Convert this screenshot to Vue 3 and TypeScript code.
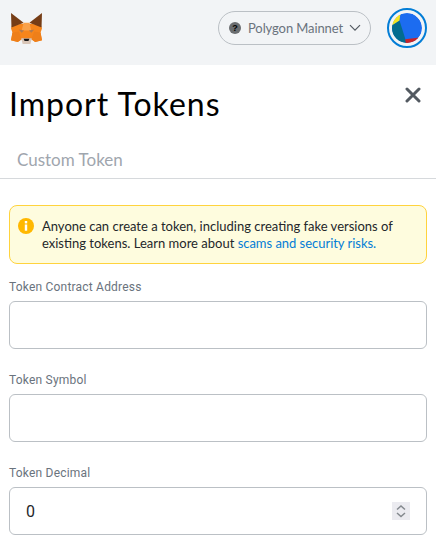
<script setup lang="ts">
import { ref } from 'vue'

const address = ref('')
const symbol = ref('')
const decimal = ref(0)
</script>

<template>
  <div class="page">
    <header class="bar">
      <svg class="fox" viewBox="0 0 34 32" aria-hidden="true">
        <polygon points="2,13 12,11 22,11 32,13 33,16 31.5,20 33,28 26,30 22,27 12,27 8,30 1,28 2.5,20 1,16" fill="#f6851b" />
        <polygon points="1,0 14,10 1.5,15" fill="#763d16" />
        <polygon points="33,0 20,10 32.5,15" fill="#763d16" />
        <polygon points="14,10 20,10 22,18 12,18" fill="#f9a14a" />
        <polygon points="2.5,20 9,19 12,27 8,30 1,28" fill="#ee7f1a" />
        <polygon points="31.5,20 25,19 22,27 26,30 33,28" fill="#ee7f1a" />
        <polygon points="9,17 14.5,18 12,20.5" fill="#b07a50" />
        <polygon points="25,17 19.5,18 22,20.5" fill="#b07a50" />
        <polygon points="11.5,26 22.5,26 21,32 13,32" fill="#d9c6b8" />
        <polygon points="14,26.5 20,26.5 19,29 15,29" fill="#161616" />
      </svg>
      <button class="network" type="button">
        <span class="network-dot">?</span>
        <span class="network-name">Polygon Mainnet</span>
        <svg class="chev" viewBox="0 0 12 8" aria-hidden="true"><path d="M1 1.2l5 5 5-5" fill="none" stroke="#535a61" stroke-width="1.2" /></svg>
      </button>
      <div class="avatar">
        <svg viewBox="0 0 32 32" aria-hidden="true">
          <circle cx="16" cy="16" r="16" fill="#1c6cf0" />
          <path d="M0 13L8 8 15.5 32H0z" fill="#036c8f" />
          <path d="M0 13L8 8 9 0H0z" fill="#f3e51f" />
          <path d="M14 28L29.5 26 22 34H15z" fill="#c8242a" />
        </svg>
      </div>
    </header>

    <main class="content">
      <div class="title-row">
        <h1>Import Tokens</h1>
        <button class="close" type="button" aria-label="Close">
          <svg viewBox="0 0 16 16" aria-hidden="true"><path d="M2 2l12 12M14 2L2 14" stroke="#535a61" stroke-width="3" stroke-linecap="round" /></svg>
        </button>
      </div>

      <div class="tabs"><span>Custom Token</span></div>

      <section class="form">
        <div class="alert">
          <svg class="alert-icon" viewBox="0 0 16 16" aria-hidden="true">
            <circle cx="8" cy="8" r="8" fill="#ffb800" />
            <rect x="6.8" y="3" width="2.4" height="2.4" fill="#fff" />
            <rect x="6.8" y="6.5" width="2.4" height="6.2" fill="#fff" />
          </svg>
          <p>Anyone can create a token, including creating fake versions of existing tokens. Learn more about <a href="#">scams and security risks.</a></p>
        </div>

        <label class="field">
          <span>Token Contract Address</span>
          <input v-model="address" type="text" />
        </label>
        <label class="field">
          <span>Token Symbol</span>
          <input v-model="symbol" type="text" />
        </label>
        <label class="field">
          <span>Token Decimal</span>
          <input v-model="decimal" type="number" />
          <i class="spin" aria-hidden="true">
            <svg viewBox="0 0 18 18"><path d="M5 7.5l4-3.5 4 3.5M5 11l4 3.5 4-3.5" fill="none" stroke="#84898e" stroke-width="1.5" /></svg>
          </i>
        </label>
      </section>
    </main>
  </div>
</template>

<style>
html, body { margin: 0; background: #fff; }
</style>

<style scoped>
.page {
  width: 436px;
  height: 546px;
  overflow: hidden;
  font-family: Lato, "Noto Sans", sans-serif;
  color: #24272a;
  background: #fff;
}
.bar {
  height: 65px;
  box-sizing: border-box;
  display: flex;
  align-items: center;
  padding: 0 9px 9px 10px;
  background: #f2f4f6;
}
.fox { width: 33px; height: 31px; }
.network {
  margin-left: auto;
  width: 153px;
  height: 34px;
  box-sizing: border-box;
  display: flex;
  align-items: center;
  padding: 0 9px 0 10px;
  border: 1px solid #bbc0c5;
  border-radius: 17px;
  background: transparent;
  font: inherit;
  color: #6a737d;
}
.network-dot {
  flex: none;
  width: 12px;
  height: 12px;
  border-radius: 50%;
  background: #6a6d70;
  color: #000;
  font: bold 9px/12px "Liberation Sans", sans-serif;
  text-align: center;
}
.network-name { margin-left: 7px; font-size: 13px; letter-spacing: -0.1px; white-space: nowrap; }
.chev { width: 12px; height: 8px; margin-left: auto; }
.avatar {
  width: 40px;
  height: 40px;
  box-sizing: border-box;
  margin-left: 16px;
  padding: 3px;
  border: 2px solid #037dd6;
  border-radius: 50%;
}
.avatar svg { display: block; width: 100%; height: 100%; border-radius: 50%; }
.content { padding: 0 9px; }
.title-row {
  height: 79px;
  display: flex;
  justify-content: space-between;
}
h1 {
  margin: 20px 0 0;
  font-size: 32px;
  line-height: 38px;
  font-weight: 400;
  letter-spacing: 1px;
  color: #000;
}
.close {
  width: 16px;
  height: 16px;
  margin: 22px 6px 0 0;
  padding: 0;
  border: 0;
  background: none;
}
.close svg { display: block; width: 16px; height: 16px; }
.tabs {
  margin: 0 -9px;
  height: 35px;
  padding-left: 17px;
  box-sizing: border-box;
  border-bottom: 1px solid #d6d9dc;
  font-size: 17px;
  line-height: 32px;
  color: #9fa6ae;
}
.form { padding-top: 26px; }
.alert {
  height: 59px;
  box-sizing: border-box;
  display: flex;
  padding: 12px 8px;
  border: 1px solid #ffd33d;
  border-radius: 8px;
  background: #fefcde;
  margin-bottom: 14px;
}
.alert-icon { flex: none; width: 16px; height: 16px; margin-right: 8px; }
.alert p { margin: 0; font-size: 13px; line-height: 17px; color: #24272a; }
.alert a { color: #037dd6; text-decoration: none; letter-spacing: -0.03px; }
.field { position: relative; display: block; margin-bottom: 22px; }
.field span {
  display: block;
  height: 23px;
  font: 12px/18px Roboto, sans-serif;
  letter-spacing: 0.2px;
  color: #6a737d;
}
.field input {
  display: block;
  width: 100%;
  height: 48px;
  box-sizing: border-box;
  padding: 0 16px;
  border: 1px solid #bbc0c5;
  border-radius: 6px;
  background: #fff;
  font: 16px Roboto, sans-serif;
  color: #24272a;
  outline: none;
}
.field input::-webkit-inner-spin-button { appearance: none; margin: 0; }
.spin {
  position: absolute;
  right: 17px;
  bottom: 15px;
  width: 18px;
  height: 18px;
  background: #ebebf0;
}
.spin svg { display: block; width: 18px; height: 18px; }
</style>
